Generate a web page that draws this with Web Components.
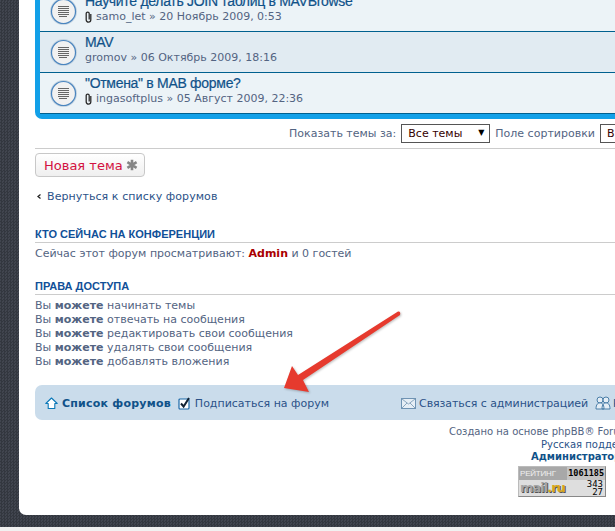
<!DOCTYPE html>
<html lang="ru">
<head>
<meta charset="utf-8">
<title>Форум</title>
<style>
  html, body { margin: 0; height: 531px; overflow: hidden; background: #f1f1f1; }
  body { font: 11px "DejaVu Sans", Verdana, sans-serif; color: #536482; }
</style>
</head>
<body>
<forum-page>
  <topic-list>
    <topic-row title-text="Научите делать JOIN таблиц в MAVBrowse" author="samo_let" date="20 Ноябрь 2009, 0:53" clip></topic-row>
    <topic-row title-text="MAV" author="gromov" date="06 Октябрь 2009, 18:16" alt></topic-row>
    <topic-row title-text="&quot;Отмена&quot; в MAB форме?" author="ingasoftplus" date="05 Август 2009, 22:36" clip></topic-row>
  </topic-list>
  <sort-bar></sort-bar>
  <new-topic-button>Новая тема</new-topic-button>
  <back-link>Вернуться к списку форумов</back-link>
  <info-section heading="КТО СЕЙЧАС НА КОНФЕРЕНЦИИ" style="--top:24px">
    Сейчас этот форум просматривают: <b style="color:#a00">Admin</b> и 0 гостей
  </info-section>
  <info-section heading="ПРАВА ДОСТУПА" style="--top:18px">
    <div>Вы <b>можете</b> начинать темы</div>
    <div>Вы <b>можете</b> отвечать на сообщения</div>
    <div>Вы <b>можете</b> редактировать свои сообщения</div>
    <div>Вы <b>можете</b> удалять свои сообщения</div>
    <div>Вы <b>можете</b> добавлять вложения</div>
  </info-section>
  <nav-bar></nav-bar>
  <page-footer></page-footer>
  <red-arrow></red-arrow>
</forum-page>

<script>
// shared little drawing helpers
const clipIcon = `<svg width="7" height="12" viewBox="0 0 7 12" fill="none" stroke="#2a2a2a" stroke-width="1.3"><path d="M5.8 3v5.8a2.3 2.3 0 0 1-4.6 0V2.6a1.5 1.5 0 0 1 3 0v6"/></svg>`;

class ForumPage extends HTMLElement {
  connectedCallback() {
    if (this.shadowRoot) return;
    this.attachShadow({ mode: 'open' });
    this.shadowRoot.innerHTML = `
    <style>
      :host { display: block; height: 527px; overflow: hidden; position: relative; background-color: #3a3e49;
        background-image: repeating-conic-gradient(#33373f 0 25%, #41454f 0 50%); background-size: 3px 3px; }
      .panel { width: 900px; height: 515px; margin-left: 19px; background: #fff; border-bottom-left-radius: 7px;
        padding: 0 16px; box-sizing: border-box; overflow: hidden; }
    </style>
    <div class="panel"><slot></slot></div>`;
  }
}

class TopicList extends HTMLElement {
  connectedCallback() {
    if (this.shadowRoot) return;
    this.attachShadow({ mode: 'open' });
    this.shadowRoot.innerHTML = `
    <style>
      :host { display: block; margin-top: -9px; background: #12a0e8; padding: 0 5px 5px;
        border-radius: 0 0 0 7px; }
      .inner { border-bottom: 1px solid #00608f; }
    </style>
    <div class="inner"><slot></slot></div>`;
  }
}

class TopicRow extends HTMLElement {
  connectedCallback() {
    if (this.shadowRoot) return;
    this.attachShadow({ mode: 'open' });
    const clip = this.hasAttribute('clip') ? clipIcon : '';
    this.shadowRoot.innerHTML = `
    <style>
      :host { display: flex; align-items: center; gap: 8px; height: 40px; padding-left: 10px; background: #ecf3f7;
        border-bottom: 1px solid #00608f; box-sizing: content-box; }
      :host([alt]) { background: #e1ebf2; }
      :host(:last-child) { border-bottom: 0; }
      .text { display: flex; flex-direction: column; white-space: nowrap; padding-bottom: 6px; }
      .title { font: 14px/17px "Liberation Sans", sans-serif; letter-spacing: -.3px; color: #105289; -webkit-text-stroke: .2px #105289; }
      .meta { display: flex; align-items: center; gap: 4px; line-height: 14px; color: #536482; }
      svg { flex: none; }
    </style>
    <svg width="27" height="27" viewBox="0 0 27 27">
      <circle cx="13.5" cy="13.5" r="12.5" fill="#fff" stroke="#c3d3e0" stroke-width="2"/>
      <circle cx="13.5" cy="13.5" r="12" fill="#f1f1f1" stroke="#4a85bf" stroke-width="1.2"/>
      <path d="M8 8.5h11M8 10.5h11M8 12.5h11M8 14.5h11M8 16.5h11M9 18.5h8" stroke="#666" stroke-width="1"/>
    </svg>
    <div class="text">
      <div class="title">${this.getAttribute('title-text')}</div>
      <div class="meta">${clip}<span>${this.getAttribute('author')} » ${this.getAttribute('date')}</span></div>
    </div>`;
  }
}

class SortBar extends HTMLElement {
  connectedCallback() {
    if (this.shadowRoot) return;
    this.attachShadow({ mode: 'open' });
    this.shadowRoot.innerHTML = `
    <style>
      :host { display: block; height: 30px; border-bottom: 1px solid #ccc; box-sizing: border-box; }
      .row { display: flex; align-items: center; height: 19px; padding-top: 5px; padding-left: 254px; white-space: nowrap; }
      .sel { box-sizing: border-box; width: 89px; height: 19px; border: 1px solid #555; background: #fff; color: #300;
        font-size: 11px; line-height: 18px; padding-left: 6px; margin: 0 5px; position: relative; }
      .sel i { position: absolute; right: 5px; top: 0; font: 8px/15px "DejaVu Sans"; color: #000; }
    </style>
    <div class="row">Показать темы за: <div class="sel">Все темы<i>▼</i></div> Поле сортировки <div class="sel">Время</div></div>`;
  }
}

class NewTopicButton extends HTMLElement {
  connectedCallback() {
    if (this.shadowRoot) return;
    this.attachShadow({ mode: 'open' });
    this.shadowRoot.innerHTML = `
    <style>
      :host { display: inline-flex; align-items: center; gap: 3px; height: 24px; width: 110px; box-sizing: border-box; margin-top: 4px; padding: 0 0 0 8px;
        border: 1px solid #c8c8c8; border-radius: 4px; background: linear-gradient(#fff, #efefef);
        color: #d31141; font-size: 13px; }
    </style>
    <slot></slot>
    <svg width="12" height="12" viewBox="0 0 12 12"><path d="M6 .8v10.4M1.4 3.2l9.2 5.6M10.6 3.2l-9.2 5.6" stroke="#868686" stroke-width="2.6"/></svg>`;
  }
}

class BackLink extends HTMLElement {
  connectedCallback() {
    if (this.shadowRoot) return;
    this.attachShadow({ mode: 'open' });
    this.shadowRoot.innerHTML = `
    <style>
      :host { display: flex; align-items: center; gap: 6px; margin-top: 12px; padding-left: 2px; height: 14px; color: #2b5288; letter-spacing: .08px; }
    </style>
    <svg width="4" height="5" viewBox="0 0 4 5"><path d="M3.5 0.5L1 2.5l2.5 2" fill="none" stroke="#222" stroke-width="1.3"/></svg>
    <span><slot></slot></span>`;
  }
}

class InfoSection extends HTMLElement {
  connectedCallback() {
    if (this.shadowRoot) return;
    this.attachShadow({ mode: 'open' });
    this.shadowRoot.innerHTML = `
    <style>
      :host { display: block; margin-top: var(--top, 20px); line-height: 14px; }
      h3 { margin: 0 0 4px; padding-bottom: 1px; border-bottom: 1px solid #ccc; font: bold 11px/14px "Liberation Sans", sans-serif; color: #115098; }
    </style>
    <h3>${this.getAttribute('heading')}</h3>
    <slot></slot>`;
  }
}

class NavBar extends HTMLElement {
  connectedCallback() {
    if (this.shadowRoot) return;
    this.attachShadow({ mode: 'open' });
    this.shadowRoot.innerHTML = `
    <style>
      :host { display: flex; align-items: center; height: 35px; box-sizing: border-box; margin-top: 16px; padding: 1px 0 0 10px; background: #cadceb;
        border-radius: 7px; white-space: nowrap; color: #105289; }
      b { margin: 0 7px 0 4px; letter-spacing: .22px; }
      .sub { margin-left: 4px; color: #2b5288; }
      .mail { display: flex; align-items: center; gap: 3px; margin-left: 72px; color: #2b5288; letter-spacing: -.07px; }
      .team { margin-left: 7px; flex: none; }
    </style>
    <svg width="13" height="13" viewBox="0 0 13 13"><path d="M6.5 1L12.2 6.5H9.8V11.5H3.2V6.5H.8Z" fill="#fff" stroke="#0a78b8" stroke-width="1.1" stroke-linejoin="round"/></svg>
    <b>Список форумов</b>
    <svg width="13" height="13" viewBox="0 0 13 13"><rect x="1" y="2" width="10" height="10" rx="1" fill="#fff" stroke="#1a68a8" stroke-width="1.2"/><path d="M3 6.5l2.6 3L11 1" fill="none" stroke="#123" stroke-width="2"/></svg>
    <span class="sub">Подписаться на форум</span>
    <span class="mail">
      <svg width="15" height="11" viewBox="0 0 15 11"><rect x=".5" y=".5" width="14" height="10" fill="#e6eef5" stroke="#6f93b3"/><path d="M1 1l6.5 5L14 1M1 10l5-5M14 10L9 5" fill="none" stroke="#8aa7bf"/></svg>
      Связаться с администрацией
    </span>
    <svg class="team" width="16" height="15" viewBox="0 0 16 15" fill="#e4edf5" stroke="#4a7ea8"><circle cx="5" cy="4" r="3"/><circle cx="11" cy="4" r="3"/><path d="M1 13c0-5 2-6 4-6s4 1 4 6zM7 13c0-5 2-6 4-6s4 1 4 6z"/></svg>
    <span style="margin-left:2px">Команда</span>`;
  }
}

class PageFooter extends HTMLElement {
  connectedCallback() {
    if (this.shadowRoot) return;
    this.attachShadow({ mode: 'open' });
    this.shadowRoot.innerHTML = `
    <style>
      :host { display: block; margin-top: 6px; padding-left: 414px; line-height: 12.5px; white-space: nowrap; font-size: 10px; color: #536482; }
      .l2 { margin-left: 92px; color: #2b5288; }
      .l3 { margin-left: 82px; color: #105289; font-weight: bold; }
      mail-counter { margin: 2px 0 0 69px; }
    </style>
    <div>Создано на основе phpBB® Forum Software © phpBB Group</div>
    <div class="l2">Русская поддержка phpBB</div>
    <div class="l3">Администратор форума</div>
    <mail-counter></mail-counter>`;
  }
}

class MailCounter extends HTMLElement {
  connectedCallback() {
    if (this.shadowRoot) return;
    this.attachShadow({ mode: 'open' });
    this.shadowRoot.innerHTML = `
    <style>
      :host { display: block; width: 88px; height: 31px; box-sizing: border-box; border: 1px solid #bbb; border-right-color: #888; border-bottom-color: #888; background: #dedede; }
      .top { display: flex; justify-content: space-between; height: 13px; background: #a8a8a8; color: #f0f0f0; padding: 0 0 0 1px; font: 8px/13px "Liberation Sans", sans-serif; letter-spacing: -.2px; }
      .top span { color: #000; background: #c4c4c4; font: bold 8.5px/13px "DejaVu Sans Mono", monospace; letter-spacing: 0; padding: 0 1px; }
      .bot { display: flex; justify-content: space-between; padding: 0 2px 0 1px; }
      .logo { font: bold 13px/16px "DejaVu Sans", sans-serif; letter-spacing: -1px; color: #a4a4a4; text-shadow: 1px 1px 0 #555; }
      .logo em { color: #d8a81c; font-style: normal; }
      .nums { font: 9px/8px "DejaVu Sans Mono", monospace; color: #000; text-align: right; }
    </style>
    <div class="top">РЕЙТИНГ<span>1061185</span></div>
    <div class="bot"><div class="logo">mail<em>.ru</em></div><div class="nums">343<br>27</div></div>`;
  }
}

class RedArrow extends HTMLElement {
  connectedCallback() {
    if (this.shadowRoot) return;
    this.attachShadow({ mode: 'open' });
    // screenshot annotation, sits over the page so it is placed absolutely
    this.shadowRoot.innerHTML = `
    <style>
      :host { position: absolute; left: 0; top: 0; display: block; pointer-events: none; }
      svg { display: block; filter: drop-shadow(1px 1px 1px rgba(0,0,0,.25)); }
    </style>
    <svg width="615" height="531" viewBox="0 0 615 531"><path d="M398 311.5Q401 311 400 315L303 380L309 392L284 388L292 366L298 375Z" fill="#e63a2e"/></svg>`;
  }
}

customElements.define('forum-page', ForumPage);
customElements.define('topic-list', TopicList);
customElements.define('topic-row', TopicRow);
customElements.define('sort-bar', SortBar);
customElements.define('new-topic-button', NewTopicButton);
customElements.define('back-link', BackLink);
customElements.define('info-section', InfoSection);
customElements.define('nav-bar', NavBar);
customElements.define('page-footer', PageFooter);
customElements.define('mail-counter', MailCounter);
customElements.define('red-arrow', RedArrow);
</script>
</body>
</html>
